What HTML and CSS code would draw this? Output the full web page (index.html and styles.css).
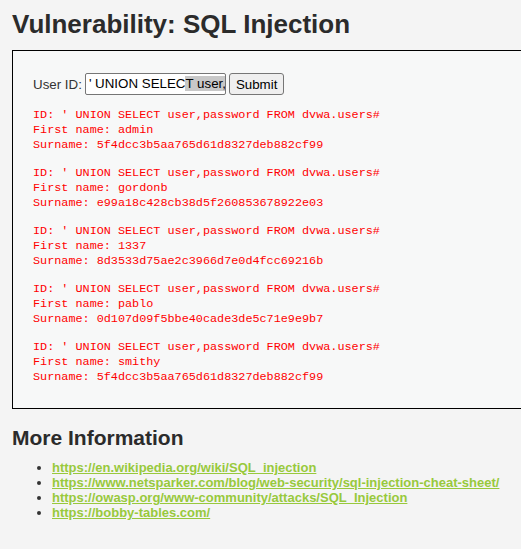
FILE: index.html
```html
<!DOCTYPE html>
<html>
<head>
<meta charset="utf-8">
<link rel="stylesheet" href="styles.css">
</head>
<body>
<div class="page">
  <h1 class="title">Vulnerability: SQL Injection</h1>
  <div class="vuln-area">
    <form class="query-form">
      <label class="label">User ID:</label>
      <span class="fake-input"><span class="fake-text">' UNION SELEC<span class="sel">T user,</span></span></span>
      <button class="submit" type="button">Submit</button>
    </form>
    <pre class="result">ID: ' UNION SELECT user,password FROM dvwa.users#
First name: admin
Surname: 5f4dcc3b5aa765d61d8327deb882cf99</pre>
    <pre class="result">ID: ' UNION SELECT user,password FROM dvwa.users#
First name: gordonb
Surname: e99a18c428cb38d5f260853678922e03</pre>
    <pre class="result">ID: ' UNION SELECT user,password FROM dvwa.users#
First name: 1337
Surname: 8d3533d75ae2c3966d7e0d4fcc69216b</pre>
    <pre class="result">ID: ' UNION SELECT user,password FROM dvwa.users#
First name: pablo
Surname: 0d107d09f5bbe40cade3de5c71e9e9b7</pre>
    <pre class="result">ID: ' UNION SELECT user,password FROM dvwa.users#
First name: smithy
Surname: 5f4dcc3b5aa765d61d8327deb882cf99</pre>
  </div>
  <h2 class="subtitle">More Information</h2>
  <ul class="links">
    <li><a href="#">https://en.wikipedia.org/wiki/SQL_injection</a></li>
    <li><a href="#">https://www.netsparker.com/blog/web-security/sql-injection-cheat-sheet/</a></li>
    <li><a href="#">https://owasp.org/www-community/attacks/SQL_Injection</a></li>
    <li><a href="#">https://bobby-tables.com/</a></li>
  </ul>
</div>
</body>
</html>
```
FILE: styles.css
```css
html {
  overflow: hidden;
}
body {
  margin: 0;
  background: #f4f4f4;
  font-family: "Liberation Sans", Arial, sans-serif;
  color: #222;
}
.page {
  padding: 0 12px;
}
.title {
  margin: 0;
  padding-top: 9px;
  font-size: 26px;
  line-height: 30px;
  font-weight: bold;
  color: #2b2b2b;
}
.vuln-area {
  margin-top: 11px;
  width: 540px;
  border: 1px solid #000;
  background: #f7f8f8;
  padding: 22px 20px 10px 20px;
}
.query-form {
  display: flex;
  align-items: center;
  gap: 3px;
  height: 22px;
  margin-bottom: 13px;
}
.label {
  font-size: 13.33px;
  color: #333;
}
.fake-input {
  display: block;
  box-sizing: border-box;
  width: 141px;
  height: 22px;
  border: 1px solid #767676;
  border-radius: 2px;
  background: #fff;
  overflow: hidden;
  white-space: nowrap;
  font-size: 13.33px;
  line-height: 20px;
  padding-left: 3px;
  color: #000;
}
.sel {
  background: #c8c8c8;
}
.submit {
  box-sizing: border-box;
  height: 22px;
  padding: 0 6px;
  border: 1px solid #767676;
  border-radius: 3px;
  background: #efefef;
  font-family: "Liberation Sans", Arial, sans-serif;
  font-size: 13.33px;
  color: #000;
}
.result {
  margin: 13px 0;
  font-family: "Liberation Mono", "DejaVu Sans Mono", monospace;
  font-size: 11.8px;
  line-height: 15px;
  color: #ff0000;
}
.subtitle {
  margin: 17px 0 0 0;
  font-size: 21px;
  line-height: 24px;
  font-weight: bold;
  color: #2b2b2b;
}
.links {
  margin: 10px 0 0 0;
  padding-left: 40px;
  font-size: 13px;
  line-height: 15px;
  color: #333;
}
.links a {
  color: #98c93c;
  font-weight: bold;
  text-decoration: underline;
}
```
